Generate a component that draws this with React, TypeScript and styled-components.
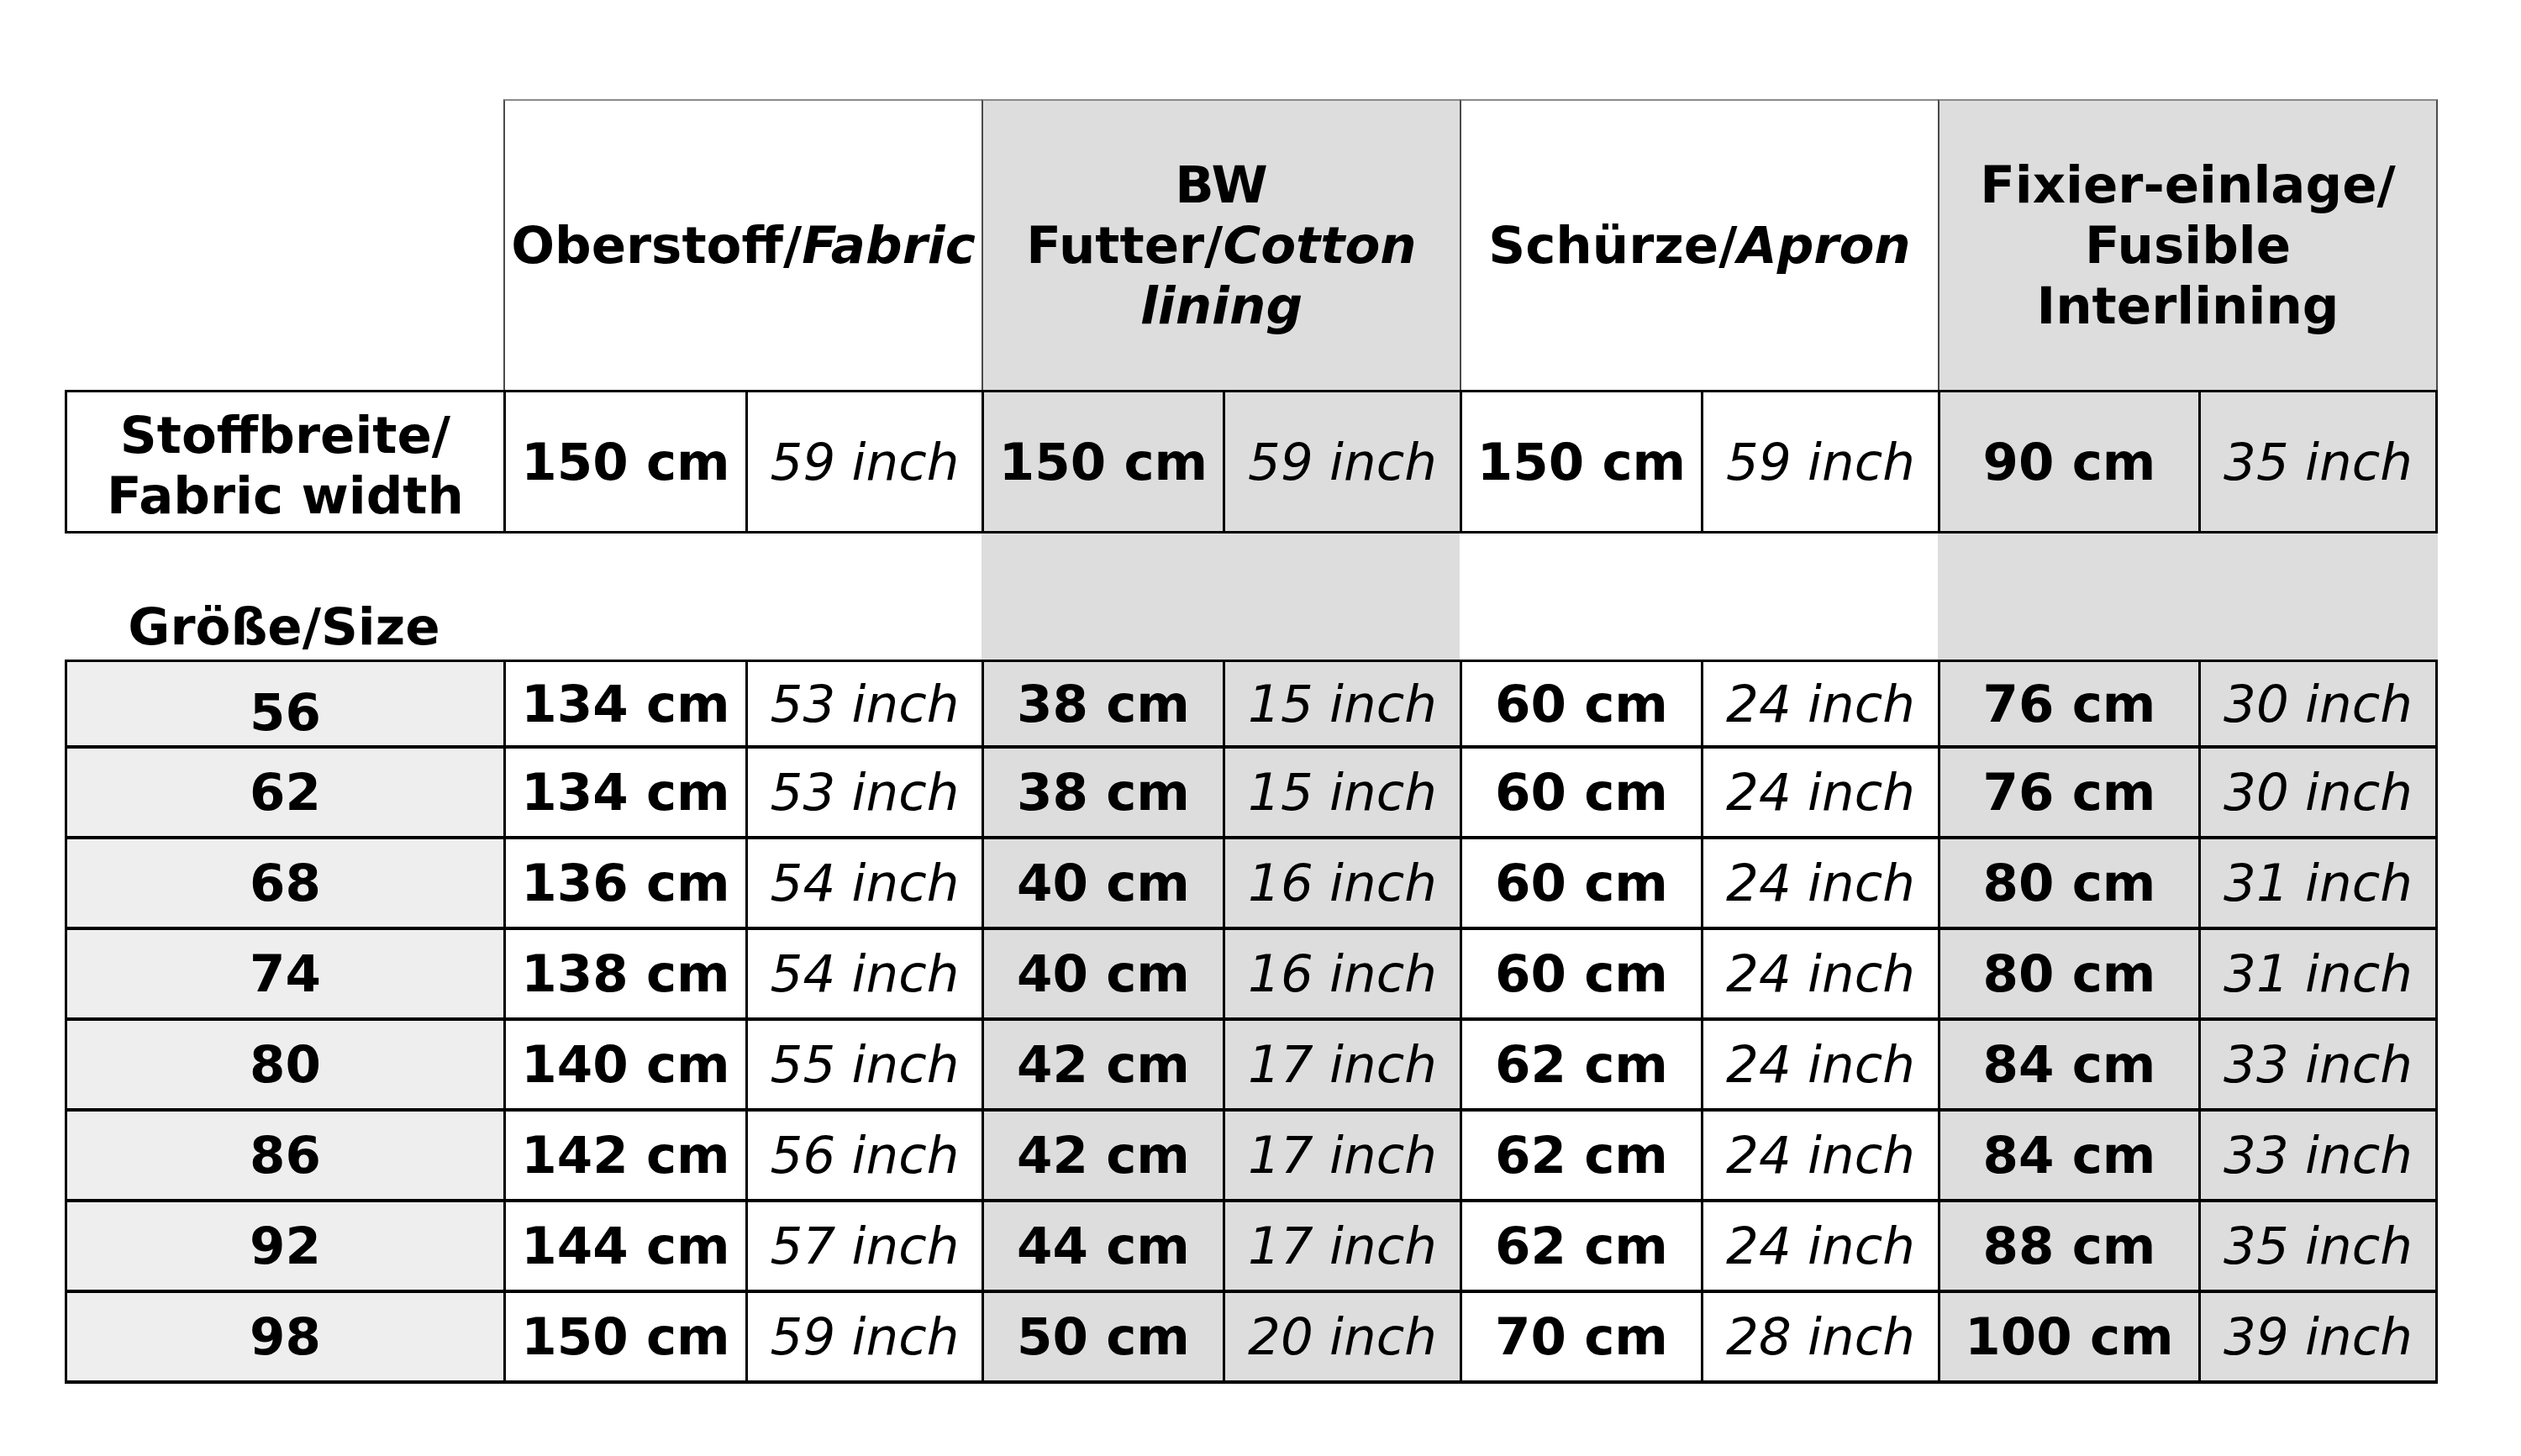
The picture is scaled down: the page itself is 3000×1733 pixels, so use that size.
import styled, { createGlobalStyle } from "styled-components";

// column widths measured from the chart (first col = size labels)
const COLS = "522px 288px 281px 287px 282px 287px 282px 310px 285px";

type Tone = "white" | "gray" | "light";

const toneColor = (t: Tone) =>
  t === "gray" ? "#dddddd" : t === "light" ? "#eeeeee" : "#ffffff";

// shading per column: BW lining and interlining columns are grey
const colTone: Tone[] = ["white", "white", "white", "gray", "gray", "white", "white", "gray", "gray"];

const widths = [
  ["150 cm", "59 inch"],
  ["150 cm", "59 inch"],
  ["150 cm", "59 inch"],
  ["90 cm", "35 inch"],
];

const sizes: { size: string; values: string[][] }[] = [
  { size: "56", values: [["134 cm", "53 inch"], ["38 cm", "15 inch"], ["60 cm", "24 inch"], ["76 cm", "30 inch"]] },
  { size: "62", values: [["134 cm", "53 inch"], ["38 cm", "15 inch"], ["60 cm", "24 inch"], ["76 cm", "30 inch"]] },
  { size: "68", values: [["136 cm", "54 inch"], ["40 cm", "16 inch"], ["60 cm", "24 inch"], ["80 cm", "31 inch"]] },
  { size: "74", values: [["138 cm", "54 inch"], ["40 cm", "16 inch"], ["60 cm", "24 inch"], ["80 cm", "31 inch"]] },
  { size: "80", values: [["140 cm", "55 inch"], ["42 cm", "17 inch"], ["62 cm", "24 inch"], ["84 cm", "33 inch"]] },
  { size: "86", values: [["142 cm", "56 inch"], ["42 cm", "17 inch"], ["62 cm", "24 inch"], ["84 cm", "33 inch"]] },
  { size: "92", values: [["144 cm", "57 inch"], ["44 cm", "17 inch"], ["62 cm", "24 inch"], ["88 cm", "35 inch"]] },
  { size: "98", values: [["150 cm", "59 inch"], ["50 cm", "20 inch"], ["70 cm", "28 inch"], ["100 cm", "39 inch"]] },
];

const GlobalStyle = createGlobalStyle`
  html, body {
    margin: 0;
    padding: 0;
    background: #ffffff;
  }
  body {
    font-family: "DejaVu Sans", "Liberation Sans", sans-serif;
    color: #000000;
  }
`;

const Page = styled.div`
  display: flex;
  flex-direction: column;
  align-items: flex-start;
  width: 3000px;
  box-sizing: border-box;
  padding: 118px 0 80px 77px;
`;

const Row = styled.div<{ $height: number }>`
  display: grid;
  grid-template-columns: ${COLS};
  height: ${(p) => p.$height}px;
`;

const Blank = styled.div``;

const HeadCell = styled.div<{ $tone: Tone; $last?: boolean }>`
  grid-column: span 2;
  display: flex;
  align-items: center;
  justify-content: center;
  box-sizing: border-box;
  background: ${(p) => toneColor(p.$tone)};
  border-top: 2px solid #8a8a8a;
  border-left: 2px solid #4a4a4a;
  border-right: ${(p) => (p.$last ? "2px solid #4a4a4a" : "none")};
  font-size: 61px;
  line-height: 72px;
  font-weight: 700;
  text-align: center;
  white-space: nowrap;
`;

const Em = styled.em`
  font-style: italic;
`;

const Cell = styled.div<{ $tone: Tone; $last?: boolean; $italic?: boolean; $shift?: number }>`
  display: flex;
  align-items: center;
  justify-content: center;
  box-sizing: border-box;
  background: ${(p) => toneColor(p.$tone)};
  border-left: 3px solid #000;
  border-right: ${(p) => (p.$last ? "3px solid #000" : "none")};
  padding-top: ${(p) => (p.$shift ? p.$shift * 2 : 0)}px;
  font-size: 61px;
  line-height: 72px;
  font-weight: ${(p) => (p.$italic ? 400 : 700)};
  font-style: ${(p) => (p.$italic ? "italic" : "normal")};
  text-align: center;
  white-space: nowrap;
`;

const WidthCell = styled(Cell)`
  border-top: 3px solid #000;
  border-bottom: 3px solid #000;
`;

const GapCell = styled.div<{ $tone: Tone }>`
  display: flex;
  align-items: flex-end;
  justify-content: center;
  padding-bottom: 3px;
  background: ${(p) => toneColor(p.$tone)};
  font-size: 61px;
  line-height: 72px;
  font-weight: 700;
  white-space: nowrap;
`;

const SizeBlock = styled.div`
  border-top: 3px solid #000;
  width: 2824px;
`;

const SizeCell = styled(Cell)`
  border-bottom: 4px solid #000;
`;

export default function App() {
  return (
    <>
      <GlobalStyle />
      <Page>
        <Row $height={346}>
          <Blank />
          <HeadCell $tone="white">
            Oberstoff/<Em>Fabric</Em>
          </HeadCell>
          <HeadCell $tone="gray">
            <div>
              BW
              <br />
              Futter/<Em>Cotton</Em>
              <br />
              <Em>lining</Em>
            </div>
          </HeadCell>
          <HeadCell $tone="white">
            Schürze/<Em>Apron</Em>
          </HeadCell>
          <HeadCell $tone="gray" $last>
            <div>
              Fixier-einlage/
              <br />
              Fusible
              <br />
              Interlining
            </div>
          </HeadCell>
        </Row>

        <Row $height={171}>
          <WidthCell $tone="white" $shift={4}>
            <div>
              Stoffbreite/
              <br />
              Fabric width
            </div>
          </WidthCell>
          {widths.flat().map((v, i) => (
            <WidthCell
              key={i}
              $tone={colTone[i + 1]}
              $italic={i % 2 === 1}
              $last={i === 7}
            >
              {v}
            </WidthCell>
          ))}
        </Row>

        <Row $height={150}>
          <GapCell $tone="white">Größe/Size</GapCell>
          {colTone.slice(1).map((t, i) => (
            <GapCell key={i} $tone={t} />
          ))}
        </Row>

        <SizeBlock>
          {sizes.map((r, ri) => (
            <Row key={r.size} $height={ri === 0 ? 103 : 108}>
              <SizeCell $tone="light" $shift={ri === 0 ? 10 : 0}>
                {r.size}
              </SizeCell>
              {r.values.flat().map((v, i) => (
                <SizeCell
                  key={i}
                  $tone={colTone[i + 1]}
                  $italic={i % 2 === 1}
                  $last={i === 7}
                >
                  {v}
                </SizeCell>
              ))}
            </Row>
          ))}
        </SizeBlock>
      </Page>
    </>
  );
}
